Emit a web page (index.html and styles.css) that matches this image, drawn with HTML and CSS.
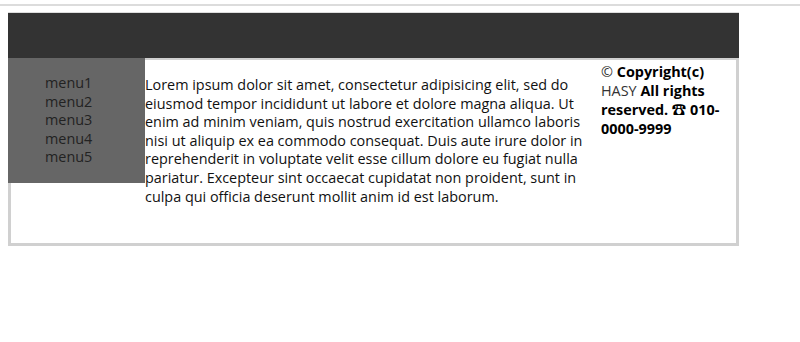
FILE: index.html
```html
<!DOCTYPE html>
<html>
<head>
<meta charset="utf-8">
<link rel="stylesheet" href="styles.css">
</head>
<body>
<div class="topline"></div>
<div class="page">
  <header class="header"></header>
  <section class="main">
    <nav class="nav">
      <ul class="menu">
        <li>menu1</li>
        <li>menu2</li>
        <li>menu3</li>
        <li>menu4</li>
        <li>menu5</li>
      </ul>
    </nav>
    <article class="article">
      <p class="lorem">Lorem ipsum dolor sit amet, consectetur adipisicing elit, sed do eiusmod tempor incididunt ut labore et dolore magna aliqua. Ut enim ad minim veniam, quis nostrud exercitation ullamco laboris nisi ut aliquip ex ea commodo consequat. Duis aute irure dolor in reprehenderit in voluptate velit esse cillum dolore eu fugiat nulla pariatur. Excepteur sint occaecat cupidatat non proident, sunt in culpa qui officia deserunt mollit anim id est laborum.</p>
    </article>
    <aside class="aside">
      <span class="light">©</span> <b>Copyright(c)</b> <span class="light">HASY</span> <b>All rights reserved. ☎ 010-0000-9999</b>
    </aside>
  </section>
</div>
</body>
</html>
```

FILE: styles.css
```css
html, body {
  margin: 0;
  padding: 0;
  background: #fff;
}
body {
  font-family: "Open Sans", "Noto Sans CJK KR", sans-serif;
  font-size: 14.4px;
  line-height: 18.6px;
  color: #111;
}
.topline {
  height: 2px;
  margin-top: 4px;
  background: #dcdcdc;
}
.page {
  width: 731px;
  margin: 6px 0 0 8px;
}
.header {
  height: 46px;
  background: #333;
  border-top: 1px solid #ddd;
  box-sizing: border-box;
}
.main {
  display: flex;
  align-items: flex-start;
  height: 188px;
  box-sizing: border-box;
  border: 3px solid #d0d0d0;
  border-top-width: 2px;
}
.nav {
  width: 137px;
  height: 125px;
  margin: -2px 0 0 -3px;
  background: #666;
  flex: none;
}
.menu {
  list-style: none;
  margin: 16px 0;
  padding: 0 0 0 37px;
  color: #222;
}
.article {
  width: 456px;
  flex: none;
}
.lorem {
  margin: 16px 0;
}
.aside {
  width: 134px;
  flex: none;
  padding-top: 2px;
  line-height: 19px;
  color: #000;
}
.aside .light {
  color: #333;
}
.aside b {
  font-weight: 700;
}
```
